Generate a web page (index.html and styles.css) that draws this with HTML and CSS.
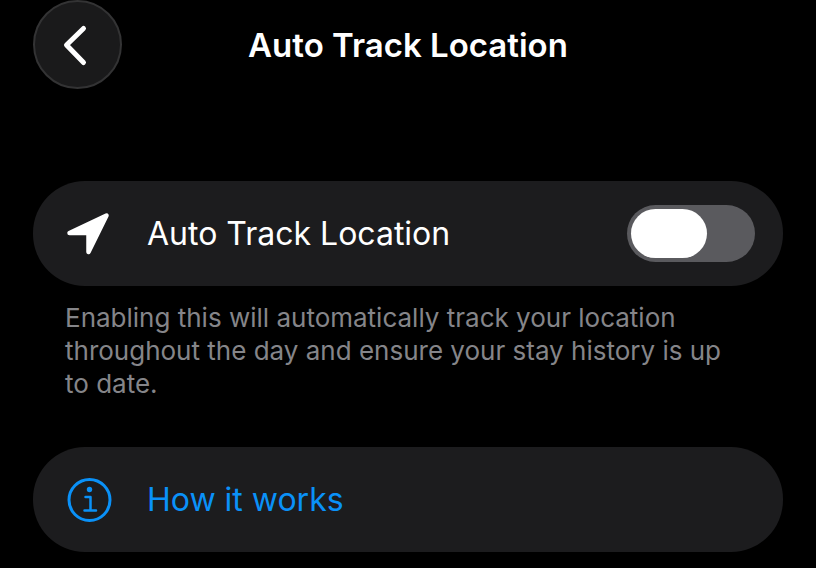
FILE: index.html
```html
<!DOCTYPE html>
<html lang="en">
<head>
    <meta charset="UTF-8">
    <meta name="viewport" content="width=device-width, initial-scale=1.0">
    <title>Auto Track Location</title>
    <link rel="stylesheet" href="styles.css">
</head>
<body>
    <header class="top-bar">
        <button type="button" class="back-btn" aria-label="Back">
            <svg width="28" height="44" viewBox="0 0 28 44">
                <path d="M22.500 5.500L5.500 22L22.500 39.500" fill="none" stroke="#fff" stroke-width="5" stroke-linecap="round" stroke-linejoin="round"/>
            </svg>
        </button>
        <h1>Auto Track Location</h1>
    </header>
    <main>
        <label class="card" for="autoTrack">
            <svg class="card-icon" width="46" height="46" viewBox="0 0 46 46">
                <path d="M3.500 22L40.500 4.500L22.500 41V22Z" fill="#fff" stroke="#fff" stroke-width="4.500" stroke-linejoin="round"/>
            </svg>
            <span class="card-text">Auto Track Location</span>
            <input type="checkbox" class="switch" id="autoTrack">
        </label>
        <p class="note">Enabling this will automatically track your location throughout the day and ensure your stay history is up to date.</p>
        <a class="card link" href="#how">
            <svg class="card-icon" width="46" height="46" viewBox="0 0 46 46" fill="none" stroke="#0a91f8" stroke-width="3">
                <circle cx="23.500" cy="23" r="20.500"/>
                <circle cx="23.500" cy="12.500" r="2.700" fill="#0a91f8" stroke="none"/>
                <path d="M19.500 20H24.500V33M18.500 33.500H30" stroke-width="2.500" stroke-linecap="round" stroke-linejoin="round"/>
            </svg>
            <span class="card-text">How it works</span>
        </a>
    </main>
</body>
</html>
```
FILE: styles.css
```css
body {
    margin: 0;
    padding: 0 33px 16px;
    background: #000;
    color: #fff;
    font-family: Inter, Arial, sans-serif;
}
.top-bar {
    display: grid;
    grid-template-columns: 89px 1fr 89px;
    align-items: center;
    margin-bottom: 92px;
}
.top-bar h1 {
    margin: 0;
    font-size: 33px;
    font-weight: 600;
    text-align: center;
}
.back-btn {
    display: flex;
    align-items: center;
    justify-content: center;
    width: 89px;
    height: 89px;
    padding: 0 6px 0 0;
    border: 2px solid #333334;
    border-radius: 50%;
    background: #1a1a1b;
    cursor: pointer;
}
.card {
    display: flex;
    align-items: center;
    box-sizing: border-box;
    min-height: 105px;
    padding: 0 28px 0 33px;
    border-radius: 52px;
    background: #1c1c1e;
    font-size: 32px;
    cursor: pointer;
}
.card-icon {
    margin-right: 35px;
}
.card-text {
    flex: 1;
}
.link {
    color: #0a91f8;
    text-decoration: none;
}
.switch {
    appearance: none;
    display: flex;
    box-sizing: border-box;
    width: 128px;
    height: 57px;
    margin: 0;
    padding: 4px;
    border-radius: 29px;
    background: #5a5a5e;
    cursor: pointer;
}
.switch::before {
    content: "";
    width: 76px;
    border-radius: 25px;
    background: #fff;
}
.switch:checked {
    justify-content: flex-end;
    background: #30d158;
}
.note {
    margin: 15px 33px 47px 32px;
    padding-right: 16px;
    color: #858589;
    font-size: 26px;
    line-height: 33px;
}
```
